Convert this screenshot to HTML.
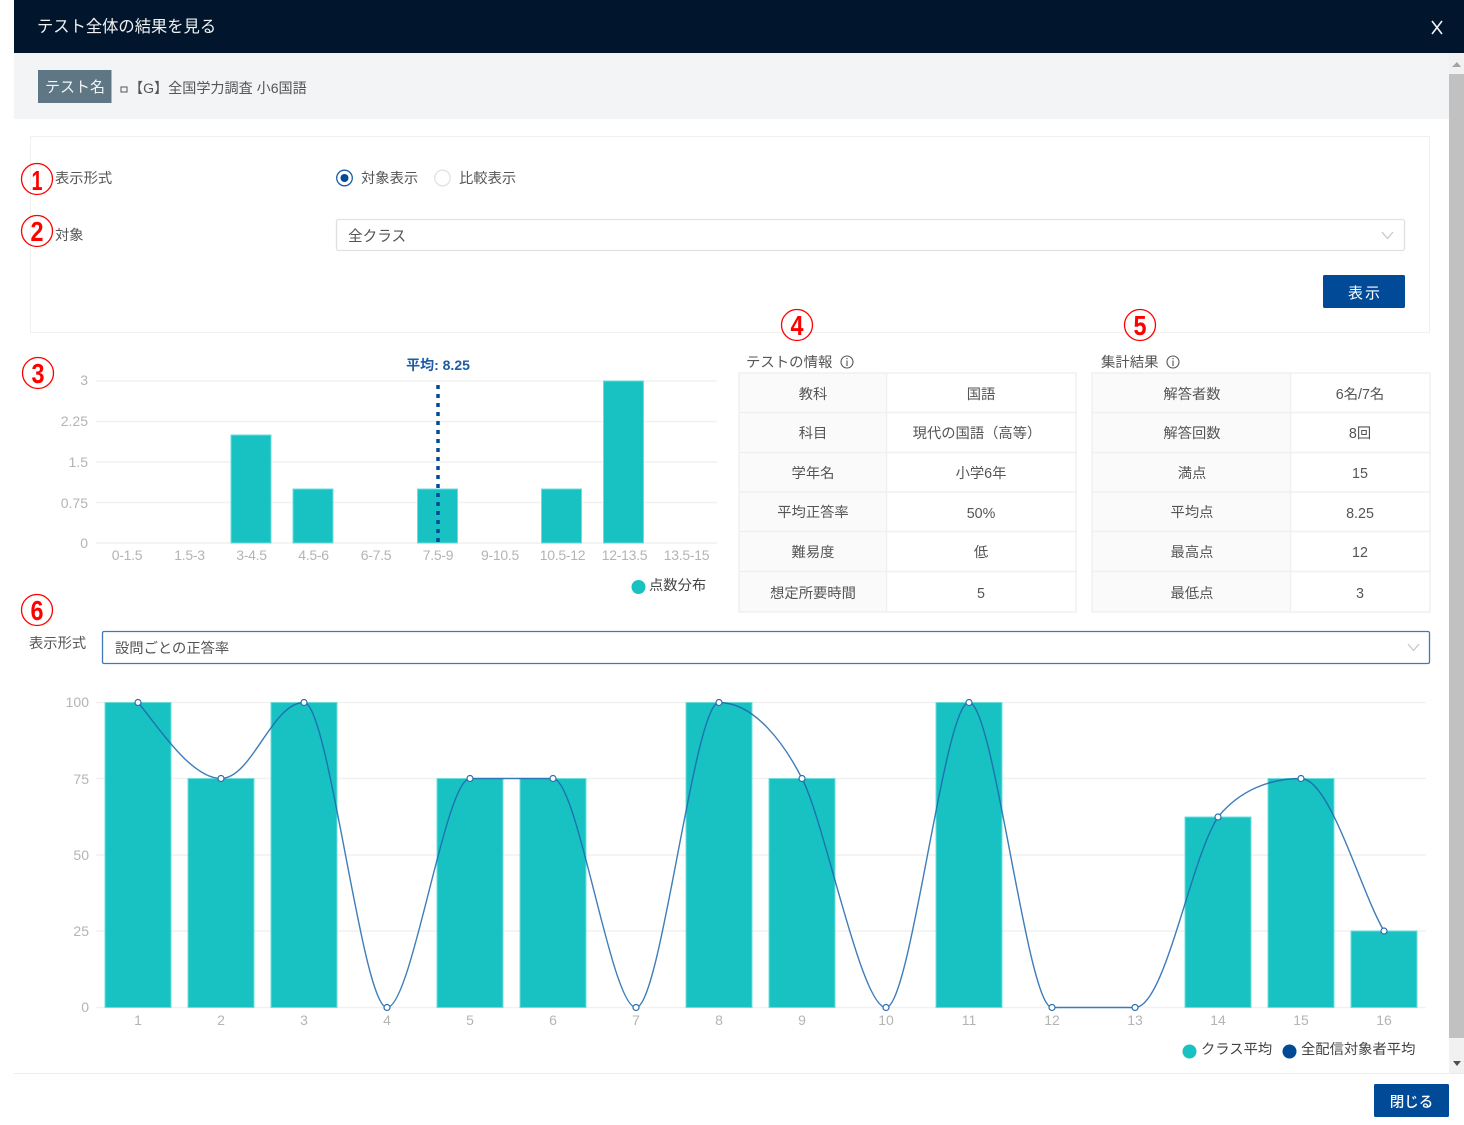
<!DOCTYPE html>
<html lang="ja"><head><meta charset="utf-8"><title>テスト全体の結果を見る</title>
<style>
html,body{margin:0;padding:0;background:#fff;width:1464px;height:1125px;overflow:hidden}
svg{display:block;font-family:"Liberation Sans","Noto Sans CJK JP",sans-serif}
text{font-size:14.3px;fill:#555}
.m{text-anchor:middle}
.e{text-anchor:end}
.ax{fill:#b4b4b4;font-size:14px}
.grid{stroke:#f1f1f1;stroke-width:1.5}
.bar{fill:#18c2c2;stroke:#6fdcdc;stroke-width:1}
.cell{fill:#fafafa}
.tl{stroke:#f0f0f0;stroke-width:1.5;fill:none}
.num{font-family:"Liberation Sans",sans-serif;font-weight:700;font-size:28px;fill:#f00;text-anchor:middle}
.c{fill:none;stroke:#f00;stroke-width:1.3}
.pt{fill:#fff;stroke:#2a6cb0;stroke-width:1.2}
</style></head><body>
<svg width="1464" height="1125" viewBox="0 0 1464 1125" xmlns="http://www.w3.org/2000/svg">
<!-- header -->
<rect x="14" y="0" width="1450" height="53" fill="#01162c"/>
<text x="37" y="32" style="font-size:16.300px;fill:#f2f2f2">テスト全体の結果を見る</text>
<path d="M1432 21 L1442 34 M1442 21 L1432 34" stroke="#f2f2f2" stroke-width="1.6" fill="none"/>
<!-- test name band -->
<rect x="14" y="53" width="1435" height="66" fill="#f3f4f6"/>
<rect x="38" y="70" width="73.500" height="33" fill="#5f7785"/>
<text x="45" y="92" style="font-size:15px;fill:#f2f4f5">テスト名</text>
<rect x="121" y="87" width="6" height="5" fill="none" stroke="#555" stroke-width="1"/>
<text x="129" y="93" style="font-size:14.100px">【G】全国学力調査 小6国語</text>
<!-- scrollbar -->
<rect x="1449" y="53" width="15" height="1021" fill="#f1f1f1"/>
<rect x="1449" y="74" width="15" height="964" fill="#c1c1c1"/>
<path d="M1452 67 L1457 62 L1461 67Z" fill="#a3a3a3"/>
<path d="M1453 1061 L1461 1061 L1457 1066Z" fill="#505050"/>
<!-- form box -->
<rect x="30.500" y="136.500" width="1399" height="196" fill="#fff" stroke="#f0f0f0"/>
<text x="55" y="183">表示形式</text>
<text x="55" y="240">対象</text>
<circle cx="344.500" cy="178" r="7.800" fill="#fff" stroke="#1a5ca6" stroke-width="1.300"/>
<circle cx="344.500" cy="178" r="4" fill="#004a97"/>
<text x="361" y="183">対象表示</text>
<circle cx="442.500" cy="178" r="7.800" fill="#fff" stroke="#e2e2e2" stroke-width="1.300"/>
<text x="459" y="183">比較表示</text>
<rect x="336.500" y="219.500" width="1068" height="31" rx="2" fill="#fff" stroke="#e1e1e1" stroke-width="1.300"/>
<text x="348" y="241" style="font-size:14.600px">全クラス</text>
<path d="M1382 232 L1387.500 238.500 L1393 232" fill="none" stroke="#c8c8c8" stroke-width="1.300"/>
<rect x="1323" y="275" width="82" height="33" rx="1.500" fill="#004a97"/>
<text x="1365" y="298" class="m" style="font-size:15px;fill:#fff;letter-spacing:2px">表示</text>
<!-- circled numbers -->
<ellipse cx="37" cy="179" rx="15.500" ry="15.500" class="c"/><text x="37" y="190" class="num" textLength="11" lengthAdjust="spacingAndGlyphs">1</text>
<ellipse cx="37" cy="231" rx="15.500" ry="15.500" class="c"/><text x="37" y="241" class="num" textLength="13" lengthAdjust="spacingAndGlyphs">2</text>
<ellipse cx="38" cy="373" rx="15.500" ry="15.500" class="c"/><text x="38" y="383" class="num" textLength="13" lengthAdjust="spacingAndGlyphs">3</text>
<ellipse cx="797" cy="325" rx="15.500" ry="15.500" class="c"/><text x="797" y="335" class="num" textLength="13" lengthAdjust="spacingAndGlyphs">4</text>
<ellipse cx="1140" cy="325" rx="15.500" ry="15.500" class="c"/><text x="1140" y="335" class="num" textLength="13" lengthAdjust="spacingAndGlyphs">5</text>
<ellipse cx="37" cy="610" rx="15.500" ry="15.500" class="c"/><text x="37" y="620" class="num" textLength="13" lengthAdjust="spacingAndGlyphs">6</text>
<!-- small chart -->
<path class="grid" d="M96 381H717M96 421.500H717M96 462H717M96 502.500H717M96 543H717"/>
<g><text class="ax e" x="88" y="385">3</text><text class="ax e" x="88" y="426">2.25</text><text class="ax e" x="88" y="467">1.5</text><text class="ax e" x="88" y="508">0.75</text><text class="ax e" x="88" y="548">0</text></g>
<rect class="bar" x="231" y="435" width="40" height="108"/>
<rect class="bar" x="293" y="489" width="40" height="54"/>
<rect class="bar" x="417.500" y="489" width="40" height="54"/>
<rect class="bar" x="541.500" y="489" width="40" height="54"/>
<rect class="bar" x="603.500" y="381" width="40" height="162"/>
<line x1="438" y1="385" x2="438" y2="543" stroke="#004a97" stroke-width="3.500" stroke-dasharray="4 5"/>
<text x="438" y="370" class="m" style="font-weight:700;fill:#1d5ba3;font-size:14px">平均: 8.25</text>
<g style="letter-spacing:-.3px">
<text class="ax m" x="127" y="560">0-1.5</text><text class="ax m" x="189.500" y="560">1.5-3</text><text class="ax m" x="251.500" y="560">3-4.5</text><text class="ax m" x="313.500" y="560">4.5-6</text><text class="ax m" x="376" y="560">6-7.5</text><text class="ax m" x="438" y="560">7.5-9</text><text class="ax m" x="500" y="560">9-10.5</text><text class="ax m" x="562.500" y="560">10.5-12</text><text class="ax m" x="624.500" y="560">12-13.5</text><text class="ax m" x="686.500" y="560">13.5-15</text>
</g>
<circle cx="638.500" cy="587" r="7" fill="#18c2c2"/>
<text x="649" y="590" style="fill:#444">点数分布</text>
<!-- info titles -->
<text x="746" y="367" style="font-size:14.400px">テストの情報</text>
<circle cx="847" cy="362" r="6" fill="none" stroke="#555" stroke-width="1.100"/><path d="M847 360.500V366M847 358V359.300" stroke="#555" stroke-width="1.100"/>
<text x="1101" y="367" style="font-size:14.400px">集計結果</text>
<circle cx="1173" cy="362" r="6" fill="none" stroke="#555" stroke-width="1.100"/><path d="M1173 360.500V366M1173 358V359.300" stroke="#555" stroke-width="1.100"/>
<!-- table 1 -->
<rect class="cell" x="739" y="373" width="147" height="239"/>
<rect x="739" y="373" width="337" height="239" class="tl"/>
<path class="tl" d="M886.500 373V612M739 412.500H1076M739 452.500H1076M739 492H1076M739 531.500H1076M739 571.500H1076"/>
<g>
<text class="m" x="813" y="399">教科</text><text class="m" x="981" y="399">国語</text>
<text class="m" x="813" y="438">科目</text><text class="m" x="977" y="438">現代の国語（高等）</text>
<text class="m" x="813" y="478">学年名</text><text class="m" x="981" y="478">小学6年</text>
<text class="m" x="813" y="517">平均正答率</text><text class="m" x="981" y="518">50%</text>
<text class="m" x="813" y="557">難易度</text><text class="m" x="981" y="557">低</text>
<text class="m" x="813" y="598">想定所要時間</text><text class="m" x="981" y="598">5</text>
</g>
<!-- table 2 -->
<rect class="cell" x="1092" y="373" width="198" height="239"/>
<rect x="1092" y="373" width="338" height="239" class="tl"/>
<path class="tl" d="M1290.500 373V612M1092 412.500H1430M1092 452.500H1430M1092 492H1430M1092 531.500H1430M1092 571.500H1430"/>
<g>
<text class="m" x="1192" y="399">解答者数</text><text class="m" x="1360" y="399">6名/7名</text>
<text class="m" x="1192" y="438">解答回数</text><text class="m" x="1360" y="438">8回</text>
<text class="m" x="1192" y="478">満点</text><text class="m" x="1360" y="478">15</text>
<text class="m" x="1192" y="517">平均点</text><text class="m" x="1360" y="518">8.25</text>
<text class="m" x="1192" y="557">最高点</text><text class="m" x="1360" y="557">12</text>
<text class="m" x="1192" y="598">最低点</text><text class="m" x="1360" y="598">3</text>
</g>
<!-- select 2 -->
<text x="29" y="648">表示形式</text>
<rect x="102.500" y="631.500" width="1327" height="32" rx="1.500" fill="#fff" stroke="#3f7ab8" stroke-width="1.300"/>
<text x="115" y="653">設問ごとの正答率</text>
<path d="M1408 644 L1413.500 650.500 L1419 644" fill="none" stroke="#c8c8c8" stroke-width="1.300"/>
<!-- big chart -->
<path class="grid" d="M96 702.500H1426M96 778.500H1426M96 855H1426M96 931H1426M96 1007.500H1426"/>
<text class="ax e" x="89" y="707">100</text><text class="ax e" x="89" y="784">75</text><text class="ax e" x="89" y="860">50</text><text class="ax e" x="89" y="936">25</text><text class="ax e" x="89" y="1012">0</text>
<rect class="bar" x="105" y="702.500" width="66" height="305"/>
<rect class="bar" x="188" y="778.500" width="66" height="229"/>
<rect class="bar" x="271" y="702.500" width="66" height="305"/>
<rect class="bar" x="437" y="778.500" width="66" height="229"/>
<rect class="bar" x="520" y="778.500" width="66" height="229"/>
<rect class="bar" x="686" y="702.500" width="66" height="305"/>
<rect class="bar" x="769" y="778.500" width="66" height="229"/>
<rect class="bar" x="936" y="702.500" width="66" height="305"/>
<rect class="bar" x="1185" y="817" width="66" height="190.500"/>
<rect class="bar" x="1268" y="778.500" width="66" height="229"/>
<rect class="bar" x="1351" y="931" width="66" height="76.500"/>
<path fill="none" stroke="#1c66ad" stroke-opacity=".85" stroke-width="1.400" d="M138 702.500 C155 722 190 778.500 221 778.500 C252 778.500 272 702.500 304 702.500 C329 702.500 362 1007.500 387 1007.500 C412 1007.500 445 778.500 470 778.500 L553 778.500 C578 778.500 611 1007.500 636 1007.500 C661 1007.500 694 702.500 719 702.500 C755 702.500 785 745 802 778.500 C825 822 861 1007.500 886 1007.500 C911 1007.500 944 702.500 969 702.500 C994 702.500 1027 1007.500 1052 1007.500 L1135 1007.500 C1165 1007.500 1190 860 1218 817 C1240 790 1270 778.500 1301 778.500 C1330 778.500 1360 890 1384 931"/>
<g>
<circle class="pt" cx="138" cy="702.500" r="3"/><circle class="pt" cx="221" cy="778.500" r="3"/><circle class="pt" cx="304" cy="702.500" r="3"/><circle class="pt" cx="387" cy="1007.500" r="3"/><circle class="pt" cx="470" cy="778.500" r="3"/><circle class="pt" cx="553" cy="778.500" r="3"/><circle class="pt" cx="636" cy="1007.500" r="3"/><circle class="pt" cx="719" cy="702.500" r="3"/><circle class="pt" cx="802" cy="778.500" r="3"/><circle class="pt" cx="886" cy="1007.500" r="3"/><circle class="pt" cx="969" cy="702.500" r="3"/><circle class="pt" cx="1052" cy="1007.500" r="3"/><circle class="pt" cx="1135" cy="1007.500" r="3"/><circle class="pt" cx="1218" cy="817" r="3"/><circle class="pt" cx="1301" cy="778.500" r="3"/><circle class="pt" cx="1384" cy="931" r="3"/>
</g>
<text class="ax m" x="138" y="1025">1</text><text class="ax m" x="221" y="1025">2</text><text class="ax m" x="304" y="1025">3</text><text class="ax m" x="387" y="1025">4</text><text class="ax m" x="470" y="1025">5</text><text class="ax m" x="553" y="1025">6</text><text class="ax m" x="636" y="1025">7</text><text class="ax m" x="719" y="1025">8</text><text class="ax m" x="802" y="1025">9</text><text class="ax m" x="886" y="1025">10</text><text class="ax m" x="969" y="1025">11</text><text class="ax m" x="1052" y="1025">12</text><text class="ax m" x="1135" y="1025">13</text><text class="ax m" x="1218" y="1025">14</text><text class="ax m" x="1301" y="1025">15</text><text class="ax m" x="1384" y="1025">16</text>
<circle cx="1189.500" cy="1051.500" r="7" fill="#18c2c2"/>
<text x="1201" y="1054" style="fill:#444">クラス平均</text>
<circle cx="1289.500" cy="1051.500" r="7" fill="#004a97"/>
<text x="1301" y="1054" style="fill:#444">全配信対象者平均</text>
<!-- footer -->
<rect x="14" y="1073" width="1450" height="1" fill="#ececec"/>
<rect x="1374" y="1084" width="75" height="33" rx="1.500" fill="#004a97"/>
<text x="1411.500" y="1107" class="m" style="font-size:14.500px;fill:#fff;font-weight:500">閉じる</text>
</svg>
</body></html>
